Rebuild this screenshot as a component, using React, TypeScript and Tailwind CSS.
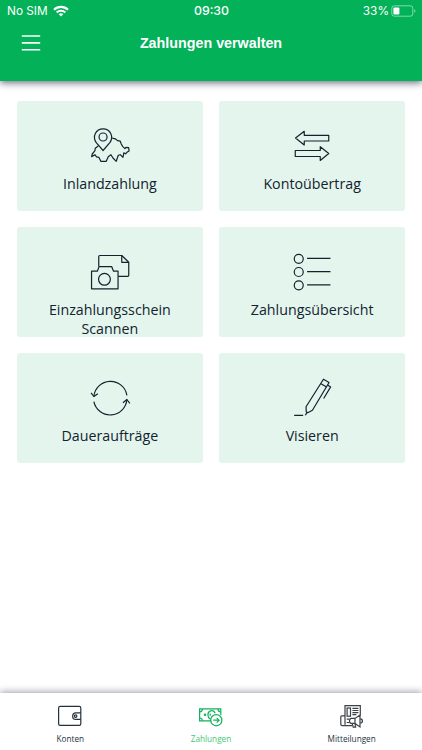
import type { ReactNode } from "react";

const tiles: { label: string; viewBox: string; icon: ReactNode }[] = [
  {
    label: "Inlandzahlung",
    viewBox: "-0.25 0 60 50",
    icon: (
      <>
        <path d="M22.8 30.5 16 22.7C11.8 16.7 15.5 8.8 22.8 8.8s11 7.9 6.8 13.9z" />
        <circle cx="22.8" cy="17" r="4" />
        <path d="M32 18.2 35 18.8 37.3 20.6 40 21.2 41 24 42.6 26.6 44.7 28.6 45.7 27.4 48.4 27.6 48.8 31 46.7 32.3 45.4 33.8 43.6 32.8 42.7 37.4 40 34.7 38 35.3 36 41.3 32.7 38 30.7 34.7 28 36.7 26 41.3 20.7 41.4 18.7 37.4 16.3 36.8 14.6 34.7 11.4 36.7 12 34 14.7 30.7 15 28.3 18 26" />
      </>
    ),
  },
  {
    label: "Kontoübertrag",
    viewBox: "-2.75 0 60 50",
    icon: (
      <>
        <path d="M10.8 18 19.5 11.3v4H44v5.7H19.5v4z" />
        <path d="M44 33.5 35.5 26.7v3.8h-25v6h25v4z" />
      </>
    ),
  },
  {
    label: "Einzahlungsschein Scannen",
    viewBox: "-0.25 1 60 50",
    icon: (
      <>
        <path d="M18.5 21.5v-10q0-1 1-1h22l7 6.8v13q0 1-1 1H38" />
        <path d="M41.5 10.5v6.8h7" />
        <path d="M11.3 43.8V26.2h5.8l1.7-4.6h12.6l1.9 4.6h4.5v17.6z" />
        <circle cx="24.2" cy="34.3" r="5.9" />
      </>
    ),
  },
  {
    label: "Zahlungsübersicht",
    viewBox: "-2.75 1 60 50",
    icon: (
      <>
        <circle cx="14" cy="13.8" r="4.5" />
        <circle cx="14" cy="27" r="4.5" />
        <circle cx="14" cy="40.3" r="4.5" />
        <path d="M22.3 13.4h23.4M22.3 26.6h23.4M22.3 39.8h23.4" />
      </>
    ),
  },
  {
    label: "Daueraufträge",
    viewBox: "-0.25 0.5 60 50",
    icon: (
      <>
        <path d="M46.7 23.8A16.7 16.7 0 0 0 13.6 25" />
        <path d="M10.8 21.3 13.6 25l4-2.8" />
        <path d="M13.6 30.2A16.7 16.7 0 0 0 46.6 28" />
        <path d="M42.7 31.3 46.6 28l3 3.8" />
      </>
    ),
  },
  {
    label: "Visieren",
    viewBox: "-2.75 0.5 60 50",
    icon: (
      <>
        <path d="M9.4 43.8h9M20.6 43.8l1.7-2.9" />
        <path d="M38.7 7.7 44.3 11 27.7 38.8l-4.7 2.4-1.5-.9-.2-5.1z" />
        <path d="M36.2 12.2l5.6 3.2M42.8 13.4l3.1 2-7 11.6" />
      </>
    ),
  },
];

const tabs: { label: string; className: string; icon: ReactNode }[] = [
  {
    label: "Konten",
    className: "text-[#24323c]",
    icon: (
      <g strokeWidth="1.2">
        <rect x="3.6" y="5.4" width="22.2" height="19" rx="1.6" />
        <path d="M25.8 11.9h-4.9a3.2 3.2 0 0 0 0 6.5h4.9" />
        <circle cx="20.6" cy="15.1" r="1.3" />
      </g>
    ),
  },
  {
    label: "Zahlungen",
    className: "text-[#43c777]",
    icon: (
      <g stroke="#10b35d" strokeWidth="1.2">
        <path d="M15.4 19.8H3.6V7.9h21.2v6" />
        <circle cx="9" cy="13.8" r=".7" />
        <path d="M6.4 8a2.8 2.8 0 0 1-2.7 2.8M3.7 17a2.8 2.8 0 0 1 2.7 2.7M22 8a2.8 2.8 0 0 0 2.7 2.8" />
        <path d="M14.2 17.9c-3.2-1.8-3-6.8.3-8 2.1-.6 4 .5 4.6 2.3" />
        <path d="M14.2 12.5v2.2" />
        <circle cx="20.3" cy="19.2" r="5.6" />
        <path d="M17.3 19.2h5.8M20.7 16.8l2.4 2.4-2.4 2.4" />
      </g>
    ),
  },
  {
    label: "Mitteilungen",
    className: "text-[#24323c]",
    icon: (
      <g stroke="#3d4146" strokeWidth="1.2">
        <path d="M8 23.7V4.6h15.3v10" />
        <path d="M8 14.9H4.6c-.5 0-.8.3-.8.8v7.5c0 .8.6 1.4 1.5 1.4H15" />
        <rect x="10.1" y="7" width="3.4" height="8.2" />
        <path d="M15.4 7.4h6M15.4 9.5h6M15.4 11.6h6M15.4 13.7h4M9.7 18.2h2.3M9.7 21.5h2.3" />
        <path d="M14.3 17.4h3.6l5.1-3.3v11.8l-5.1-3.5h-3.6c-2.4-.2-2.4-4.8 0-5z" />
        <path d="M18 17.5v4.7M23.2 17.8c3 .2 3 4 0 4.2M15.2 22.7l1 3.5h2.4l-.6-3.5" />
      </g>
    ),
  },
];

export default function App() {
  return (
    <div className="flex h-[750px] w-[422px] flex-col overflow-hidden bg-white font-['Open_Sans','Noto_Sans',sans-serif]">
      <header className="h-[80.5px] shrink-0 bg-[#02b158] text-white shadow-[0_2px_7px_rgba(35,35,65,0.65)]">
        <StatusBar />
        <div className="grid h-[42px] grid-cols-[62px_1fr_62px] items-center">
          <button aria-label="Menü" className="pl-[21px]">
            <svg width="20" height="18" viewBox="0 0 20 18" fill="none" stroke="currentColor" strokeWidth="1.6">
              <path d="M.8 2h18.4M.8 8.9h18.4M.8 15.7h18.4" />
            </svg>
          </button>
          <h1 className="text-center font-['Liberation_Sans',sans-serif] text-[14.3px] leading-5 font-bold">
            Zahlungen verwalten
          </h1>
        </div>
      </header>

      <main className="grid flex-1 auto-rows-[110px] grid-cols-2 content-start gap-x-4 gap-y-[16.2px] px-[16.7px] pt-[20.4px]">
        {tiles.map((tile) => (
          <button
            key={tile.label}
            className="flex flex-col items-center rounded-[3px] bg-[#e4f5ed] pt-[19px] text-[#13232d]"
          >
            <svg
              width="60"
              height="50"
              viewBox={tile.viewBox}
              fill="none"
              stroke="currentColor"
              strokeWidth="1.2"
              strokeLinejoin="round"
              className="shrink-0"
            >
              {tile.icon}
            </svg>
            <span className="mt-1 w-[150px] text-center text-[14.25px] leading-[19px]">{tile.label}</span>
          </button>
        ))}
      </main>

      <nav className="grid h-[57px] shrink-0 grid-cols-3 bg-white shadow-[0_-1px_7px_rgba(35,35,65,0.45)]">
        {tabs.map((tab) => (
          <button key={tab.label} className={`flex flex-col items-center pt-2 ${tab.className}`}>
            <svg width="30" height="30" viewBox="0 0 30 30" fill="none" stroke="currentColor">
              {tab.icon}
            </svg>
            <span className="mt-0.5 text-[8.2px] leading-3">{tab.label}</span>
          </button>
        ))}
      </nav>
    </div>
  );
}

function StatusBar() {
  return (
    <div className="grid h-[22px] grid-cols-3 items-center pr-1.5 pl-[7px] font-['Inter',sans-serif] text-[11.8px] leading-[22px]">
      <div className="flex items-center gap-[5px]">
        <span>No SIM</span>
        <svg width="16" height="12" viewBox="0 0 16 12" fill="none" stroke="currentColor" strokeWidth="2.2">
          <path d="M1 4.7a10 10 0 0 1 14 0M3.7 7.5a6.1 6.1 0 0 1 8.6 0" />
          <path d="M8 11.6 5.7 9.3a3.3 3.3 0 0 1 4.6 0z" fill="currentColor" stroke="none" />
        </svg>
      </div>
      <span className="text-center text-[12.3px] font-medium">09:30</span>
      <div className="flex items-center justify-end gap-0.5">
        <span>33%</span>
        <svg width="25" height="12" viewBox="0 0 25 12" fill="none">
          <rect x=".8" y=".8" width="21" height="10.4" rx="2.5" stroke="#fff" strokeOpacity=".5" />
          <rect x="2.4" y="2.4" width="6" height="7.2" rx="1" fill="#fff" />
          <path d="M23.2 4.2v3.6q1.3-.6 1.3-1.8t-1.3-1.8z" fill="#fff" fillOpacity=".5" />
        </svg>
      </div>
    </div>
  );
}
